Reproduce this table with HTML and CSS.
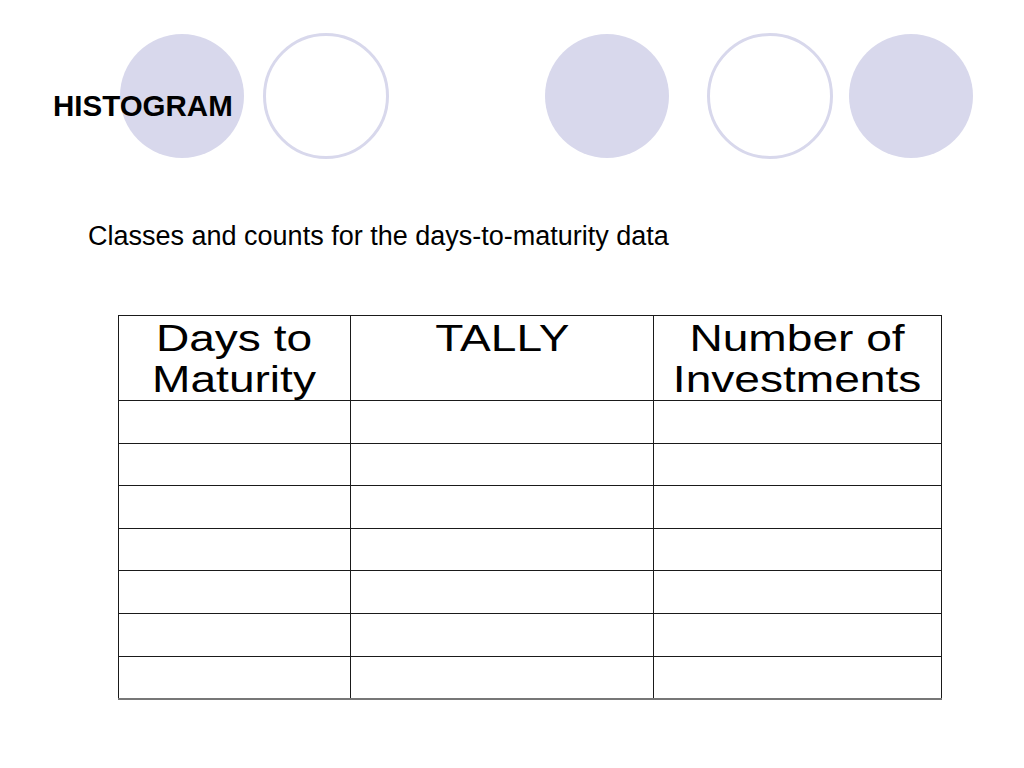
FILE: index.html
```html
<!DOCTYPE html>
<html>
<head>
<meta charset="utf-8">
<title>Histogram</title>
<link rel="stylesheet" href="styles.css">
</head>
<body>
<div class="slide">
  <header class="head">
    <div class="circles">
      <span class="circle fill c1"></span>
      <span class="circle ring c2"></span>
      <span class="circle fill c3"></span>
      <span class="circle ring c4"></span>
      <span class="circle fill c5"></span>
    </div>
    <h1 class="title">HISTOGRAM</h1>
  </header>
  <p class="subtitle">Classes and counts for the days-to-maturity data</p>
  <table class="tally">
    <colgroup>
      <col class="col1"><col class="col2"><col class="col3">
    </colgroup>
    <thead>
      <tr>
        <th><span class="wide">Days to<br>Maturity</span></th>
        <th><span class="wide">TALLY</span></th>
        <th><span class="wide">Number of<br>Investments</span></th>
      </tr>
    </thead>
    <tbody>
      <tr><td></td><td></td><td></td></tr>
      <tr><td></td><td></td><td></td></tr>
      <tr><td></td><td></td><td></td></tr>
      <tr><td></td><td></td><td></td></tr>
      <tr><td></td><td></td><td></td></tr>
      <tr><td></td><td></td><td></td></tr>
      <tr><td></td><td></td><td></td></tr>
    </tbody>
  </table>
</div>
</body>
</html>
```

FILE: styles.css
```css
* { box-sizing: border-box; }
html, body {
  margin: 0;
  padding: 0;
  background: #ffffff;
}
body {
  font-family: "Liberation Sans", Arial, Helvetica, sans-serif;
  color: #000;
}
.slide {
  width: 1024px;
  height: 768px;
  overflow: hidden;
}
.head {
  position: relative;
  height: 220px;
  padding-top: 33px;
}
.circles {
  display: flex;
  align-items: center;
  height: 126px;
}
.circle {
  display: block;
  border-radius: 50%;
  flex: none;
}
.fill {
  width: 124px;
  height: 124px;
  background: #d8d8ec;
}
.ring {
  width: 126px;
  height: 126px;
  border: 3px solid #d8d8ec;
  background: #fff;
}
.c1 { margin-left: 120px; }
.c2 { margin-left: 19px; }
.c3 { margin-left: 156px; }
.c4 { margin-left: 38px; }
.c5 { margin-left: 16px; }
.title {
  position: absolute;
  left: 53px;
  top: 91px;
  margin: 0;
  font-size: 29.5px;
  line-height: 29px;
  font-weight: bold;
  letter-spacing: 0;
}
.subtitle {
  margin: 0 0 0 88px;
  font-size: 27px;
  line-height: 32px;
}
.tally {
  margin: 63px 0 0 118px;
  border-collapse: collapse;
  table-layout: fixed;
  width: 823px;
}
.col1 { width: 232px; }
.col2 { width: 303px; }
.col3 { width: 288px; }
.tally th, .tally td {
  border: 1px solid #1a1a1a;
  padding: 0;
}
.tally th {
  height: 85px;
  padding-top: 2px;
  font-weight: normal;
  font-size: 36px;
  line-height: 41px;
  vertical-align: top;
  text-align: center;
}
.tally td {
  height: 42.6px;
}
.tally tbody tr:last-child td {
  border-bottom: 2px solid #777;
}
.wide {
  display: inline-block;
  transform: scaleX(1.28);
  white-space: nowrap;
}
```
